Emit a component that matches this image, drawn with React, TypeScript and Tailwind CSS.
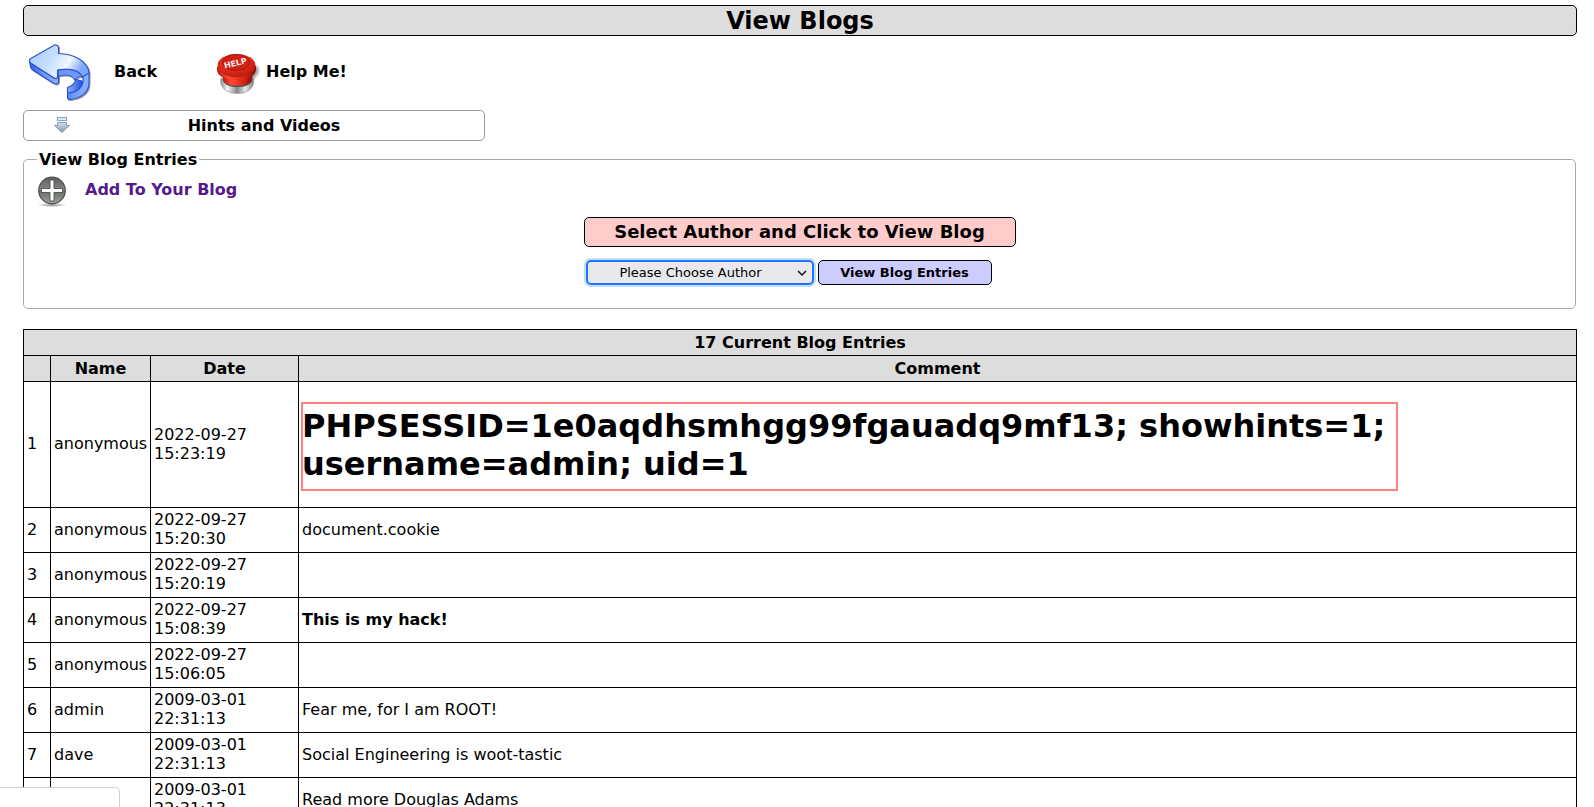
import React from "react";

type Entry = { name: string; date: string; time: string; comment: React.ReactNode };

const entries: Entry[] = [
  {
    name: "anonymous",
    date: "2022-09-27",
    time: "15:23:19",
    comment: (
      <h1 className="mt-[19px] mb-[13px] w-[1095px] max-w-full pt-1 pb-[7px] text-[32px] leading-[38px] font-bold outline-2 -outline-offset-1 outline-[#ff8080]">
        PHPSESSID=1e0aqdhsmhgg99fgauadq9mf13; showhints=1; username=admin; uid=1
      </h1>
    ),
  },
  { name: "anonymous", date: "2022-09-27", time: "15:20:30", comment: "document.cookie" },
  { name: "anonymous", date: "2022-09-27", time: "15:20:19", comment: "" },
  { name: "anonymous", date: "2022-09-27", time: "15:08:39", comment: <b>This is my hack!</b> },
  { name: "anonymous", date: "2022-09-27", time: "15:06:05", comment: "" },
  { name: "admin", date: "2009-03-01", time: "22:31:13", comment: "Fear me, for I am ROOT!" },
  { name: "dave", date: "2009-03-01", time: "22:31:13", comment: "Social Engineering is woot-tastic" },
  { name: "kevin", date: "2009-03-01", time: "22:31:13", comment: "Read more Douglas Adams" },
];

function BackIcon() {
  return (
    <svg width="64" height="60" viewBox="0 0 64 60" aria-hidden="true">
      <defs>
        <linearGradient id="backTop" x1="0" y1="0" x2="1" y2="0.35">
          <stop offset="0" stopColor="#a5ccff" />
          <stop offset="0.45" stopColor="#c3deff" />
          <stop offset="0.75" stopColor="#f2f8ff" />
          <stop offset="1" stopColor="#7aa6fb" />
        </linearGradient>
        <linearGradient id="backSide" x1="0" y1="0" x2="1" y2="0">
          <stop offset="0" stopColor="#2c5ce8" />
          <stop offset="0.5" stopColor="#6d9af8" />
          <stop offset="1" stopColor="#8bb4ff" />
        </linearGradient>
        <linearGradient id="backInner" x1="0" y1="0" x2="1" y2="0">
          <stop offset="0" stopColor="#8bb2ff" />
          <stop offset="1" stopColor="#2250d8" />
        </linearGradient>
        <filter id="backShadow" x="-10%" y="-10%" width="125%" height="125%">
          <feDropShadow dx="1" dy="1" stdDeviation="0.7" floodColor="#555" floodOpacity="0.6" />
        </filter>
      </defs>
      <g filter="url(#backShadow)" stroke="#2c50d4" strokeWidth="1.1" strokeLinejoin="round">
        <path d="M1.500 18 L2.500 24 Q3 26 5.500 27.500 L26 40.500 Q30 42 30.500 38.500 V30 L30 25 Z" fill="url(#backSide)" />
        <path d="M46 36 C49 38 46 42 39.500 44.500 V52 C50 52 56 43 54 38 Z" fill="url(#backInner)" />
        <path d="M30 33 V27 C43 25 53 27 55 35 C56 43 50 50 39.500 50 V54.500 Q39.500 56.500 42 56.500 C52 55.500 61 50 61 40 V30 L50 20 Z" fill="url(#backSide)" />
        <path d="M30.500 33 C37 31.500 43 31.500 46.500 36.500 C50 34 52 33 55 34 C52 27 42 25 30 27 Z" fill="#6c98f6" strokeWidth="0.8" />
        <path d="M2 16 Q0.500 18 2.500 20 L26 35 Q29.500 36.500 29.500 33.500 V27 C43 25 51 27 54.500 34 L61 30 C60 18 46 11 30.500 10.500 V4 Q30 1.500 26.500 2 Z" fill="url(#backTop)" />
        <path d="M2 16 Q0.500 18 2.500 20 L26 35 Q29.500 36.500 29.500 33.500 V27 C43 25 51 27 54.500 34" fill="none" strokeWidth="0.8" />
      </g>
    </svg>
  );
}

function HelpIcon() {
  return (
    <svg width="48" height="48" viewBox="0 -4 48 48" aria-hidden="true">
      <defs>
        <radialGradient id="helpCap" cx="0.4" cy="0.3" r="0.75">
          <stop offset="0" stopColor="#e23a2b" />
          <stop offset="0.65" stopColor="#d92718" />
          <stop offset="1" stopColor="#b5190d" />
        </radialGradient>
        <linearGradient id="helpBody" x1="0" y1="0" x2="1" y2="0">
          <stop offset="0" stopColor="#b5180c" />
          <stop offset="0.3" stopColor="#ff4a36" />
          <stop offset="0.7" stopColor="#d82415" />
          <stop offset="1" stopColor="#8c0d05" />
        </linearGradient>
        <linearGradient id="helpMetal" x1="0" y1="0" x2="1" y2="0">
          <stop offset="0" stopColor="#8d8d8d" />
          <stop offset="0.2" stopColor="#f5f5f5" />
          <stop offset="0.5" stopColor="#888888" />
          <stop offset="0.75" stopColor="#e8e8e8" />
          <stop offset="1" stopColor="#777777" />
        </linearGradient>
        <filter id="helpBlur">
          <feGaussianBlur stdDeviation="1.2" />
        </filter>
      </defs>
      <ellipse cx="31" cy="21" rx="13.500" ry="8" fill="#777777" opacity="0.7" filter="url(#helpBlur)" transform="rotate(-25 31 21)" />
      <path d="M6 25 C4 33 10 40.500 22.500 40.500 C35 40.500 40 33 38.500 25 Z" fill="url(#helpMetal)" stroke="#999999" strokeWidth="0.7" />
      <path d="M7.500 26 C8 37 37 37 37.500 26 Z" fill="#555555" />
      <path d="M7.500 22 C8 29 9 32.500 22 32.500 C36 32.500 37 29 37.500 22 Z" fill="url(#helpBody)" />
      <path d="M2 14 C1 22 7 26.500 22 27 C37 26.500 42 21 41 13 Z" fill="url(#helpBody)" />
      <ellipse cx="21.500" cy="12.500" rx="19" ry="11.500" fill="url(#helpCap)" />
      <ellipse cx="21" cy="9.500" rx="13.500" ry="8" fill="#cf2115" stroke="#a7160b" strokeWidth="0.8" />
      <text x="20" y="13" textAnchor="middle" transform="rotate(-13 20 9)" fill="#ffeeea" className="font-['DejaVu_Sans',sans-serif] text-[8px] font-bold">
        HELP
      </text>
    </svg>
  );
}

function DownIcon() {
  return (
    <svg width="16" height="16" viewBox="0 0 16 16" aria-hidden="true">
      <defs>
        <linearGradient id="downFill" x1="0" y1="0" x2="0" y2="1">
          <stop offset="0" stopColor="#d3dfea" />
          <stop offset="1" stopColor="#8095ad" />
        </linearGradient>
      </defs>
      <rect x="3.500" y="0.500" width="9" height="3" fill="#dcebf8" stroke="#8ba2b8" />
      <path d="M3.500 5.500 H12.500 V8.500 H15.500 L8 15.500 L0.500 8.500 H3.500 Z" fill="url(#downFill)" stroke="#8ba0b6" />
    </svg>
  );
}

function AddIcon() {
  return (
    <svg width="30" height="32" viewBox="0 0 30 32" aria-hidden="true">
      <defs>
        <linearGradient id="addFill" x1="0" y1="0" x2="0" y2="1">
          <stop offset="0" stopColor="#5c5f5d" />
          <stop offset="0.45" stopColor="#858985" />
          <stop offset="0.55" stopColor="#6d716d" />
          <stop offset="1" stopColor="#a0a39c" />
        </linearGradient>
        <radialGradient id="addShadow">
          <stop offset="0" stopColor="#888888" />
          <stop offset="1" stopColor="#ffffff" />
        </radialGradient>
      </defs>
      <ellipse cx="14" cy="29" rx="15" ry="2" fill="url(#addShadow)" />
      <circle cx="14" cy="14.500" r="13.300" fill="url(#addFill)" stroke="#4b4e4c" strokeWidth="1.200" />
      <path d="M12 4 h4 v8.500 h8.500 v4 h-8.500 v8.500 h-4 v-8.500 h-8.500 v-4 h8.500 Z" fill="#ffffff" stroke="#4b4e4c" strokeWidth="0.900" />
    </svg>
  );
}

export default function App() {
  return (
    <div className="h-screen overflow-y-auto bg-white px-[17px] pt-[5px] font-['DejaVu_Sans',sans-serif] text-[16px] leading-[19px] text-black [scrollbar-width:none]">
      <main className="ml-[6px]">
        <h2 className="rounded-[5px] border border-black bg-[#dddddd] pt-px text-center text-[24px] leading-[28px] font-bold">
          View Blogs
        </h2>

        <nav className="flex h-[74px] items-center pl-[5px] font-bold">
          <a href="#back" className="flex w-[187px] items-center gap-[22px]">
            <BackIcon />
            <span className="pb-1">Back</span>
          </a>
          <a href="#help" className="flex items-center gap-[3px]">
            <HelpIcon />
            <span className="pb-1">Help Me!</span>
          </a>
        </nav>

        <button type="button" className="grid h-[31px] w-[462px] max-w-full grid-cols-[76px_1fr_76px] items-center rounded-[5px] border border-[#999999] font-bold">
          <span className="flex justify-center pb-[2px]">
            <DownIcon />
          </span>
          <span className="pl-5">Hints and Videos</span>
        </button>

        <fieldset className="mt-[9px] mr-px rounded-[5px] border border-[#aaaaaa] px-[13px] pb-[23px]">
          <legend className="px-[2px] pt-px font-bold leading-[18px]">View Blog Entries</legend>
          <a href="#add" className="mt-[7px] flex w-fit gap-[17px] pl-px font-bold text-[#551a8b]">
            <AddIcon />
            <span className="pt-1">Add To Your Blog</span>
          </a>
          <form className="mx-auto mt-[9px] w-[432px] max-w-full" onSubmit={(e) => e.preventDefault()}>
            <label htmlFor="author" className="block rounded-[5px] border border-black bg-[#ffcccc] text-center text-[18px] leading-[28px] font-bold">
              Select Author and Click to View Blog
            </label>
            <div className="mt-[13px] flex gap-1 pl-[2px]">
              <div className="relative w-[228px]">
                <select id="author" className="h-[25px] w-full appearance-none rounded-[5px] border-2 border-[#1f75fe] bg-[#e9e9ed] pr-[18px] text-center text-[13px] leading-[19px] ring-2 ring-[#bfdfff] outline-none">
                  <option>Please Choose Author</option>
                </select>
                <svg className="pointer-events-none absolute top-[10px] right-[7px]" width="10" height="7" viewBox="0 0 10 7" fill="none" stroke="#111111" strokeWidth="1.500" aria-hidden="true">
                  <path d="M1 1 L5 5 L9 1" />
                </svg>
              </div>
              <button type="submit" className="h-[25px] w-[174px] rounded-[5px] border border-black bg-[#ccccff] text-[13px] font-bold">
                View Blog Entries
              </button>
            </div>
          </form>
        </fieldset>

        <table className="mt-5 w-full table-fixed border-collapse border border-black [&_td]:border [&_td]:border-black [&_td]:px-[3px] [&_td]:pt-[2px] [&_td]:pb-1 [&_th]:border [&_th]:border-black [&_th]:p-[3px]">
          <colgroup>
            <col className="w-[27px]" />
            <col className="w-[100px]" />
            <col className="w-[148px]" />
            <col />
          </colgroup>
          <thead className="bg-[#dddddd]">
            <tr>
              <th colSpan={4}>17 Current Blog Entries</th>
            </tr>
            <tr>
              <th aria-label="Number"></th>
              <th>Name</th>
              <th>Date</th>
              <th>Comment</th>
            </tr>
          </thead>
          <tbody>
            {entries.map((entry, i) => (
              <tr key={i}>
                <td>{i + 1}</td>
                <td>{entry.name}</td>
                <td>
                  {entry.date}
                  <br />
                  {entry.time}
                </td>
                <td>{entry.comment}</td>
              </tr>
            ))}
          </tbody>
        </table>
      </main>
      <div className="fixed bottom-0 left-0 h-5 w-[120px] rounded-tr-[5px] border-t border-r border-[#d0d0d0] bg-white" />
    </div>
  );
}
